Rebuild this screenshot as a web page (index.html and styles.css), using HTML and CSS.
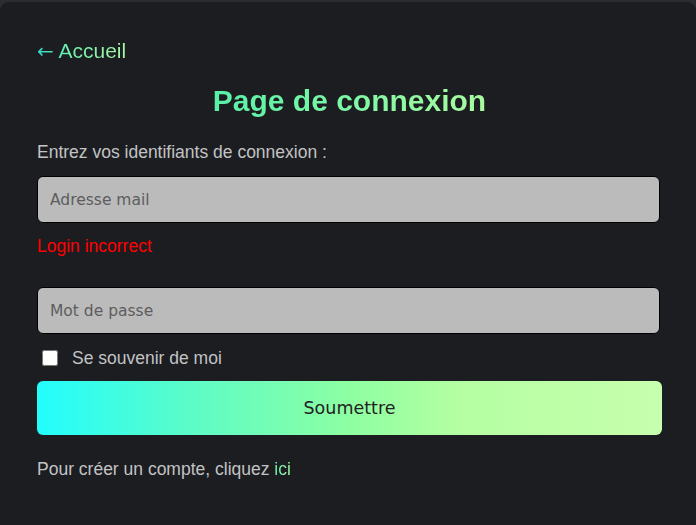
FILE: index.html
```html
<!DOCTYPE html>
<html lang="fr">
<head>
<meta charset="utf-8">
<title>Connexion</title>
<link rel="stylesheet" href="styles.css">
</head>
<body>
<main class="card">
  <a class="home" href="#"><span class="arrow">←</span> Accueil</a>
  <h1 class="title">Page de connexion</h1>
  <p class="intro">Entrez vos identifiants de connexion :</p>
  <input class="field" type="email" placeholder="Adresse mail">
  <p class="error">Login incorrect</p>
  <input class="field field-pass" type="password" placeholder="Mot de passe">
  <label class="remember"><input type="checkbox" class="check"><span>Se souvenir de moi</span></label>
  <button class="submit" type="button">Soumettre</button>
  <p class="footer">Pour créer un compte, cliquez <a class="link" href="#">ici</a></p>
</main>
</body>
</html>
```

FILE: styles.css
```css
html, body {
  margin: 0;
  padding: 0;
  background: #2b2c2f;
  height: 100%;
  overflow: hidden;
}
body {
  font-family: "Liberation Sans", Arial, sans-serif;
}
.card {
  margin-top: 2px;
  height: 540px;
  background: #1c1d21;
  border-radius: 9px;
  padding: 37px 34px 0 37px;
  box-sizing: border-box;
  display: flex;
  flex-direction: column;
  align-items: flex-start;
}
.home {
  font-size: 21px;
  line-height: 24px;
  text-decoration: none;
  background: linear-gradient(90deg, #2fd6c4 0%, #6df2ae 35%, #a6f7a2 100%);
  -webkit-background-clip: text;
  background-clip: text;
  color: transparent;
}
.arrow {
  font-family: "DejaVu Sans", sans-serif;
  font-size: 20px;
}
.title {
  align-self: center;
  margin: 20px 0 0 0;
  font-size: 30px;
  line-height: 36px;
  font-weight: bold;
  background: linear-gradient(90deg, #57f1a8 0%, #82f8a4 55%, #a9fc9f 100%);
  -webkit-background-clip: text;
  background-clip: text;
  color: transparent;
}
.intro {
  margin: 23px 0 0 0;
  font-size: 17.5px;
  line-height: 20px;
  color: #c2c3c4;
}
.field {
  margin-top: 14px;
  width: 623px;
  height: 47px;
  box-sizing: border-box;
  border: 1px solid #000;
  border-radius: 6px;
  background: #bbbbbb;
  padding: 0 12px;
  font-family: "DejaVu Sans", Tahoma, sans-serif;
  font-size: 15.5px;
  color: #333;
  outline: none;
}
.field::placeholder {
  color: #5d5d5f;
}
.error {
  margin: 13px 0 0 0;
  font-size: 17.5px;
  line-height: 20px;
  color: #ff0000;
}
.field-pass {
  margin-top: 31px;
}
.remember {
  display: flex;
  align-items: center;
  margin-top: 14px;
  font-size: 17.5px;
  line-height: 20px;
  color: #c2c3c4;
}
.check {
  width: 16px;
  height: 16px;
  margin: 0 14px 0 5px;
}
.submit {
  margin-top: 13px;
  width: 625px;
  height: 54px;
  border: none;
  border-radius: 6px;
  background: linear-gradient(90deg, #22fdfd 0%, #5dfcc6 25%, #8dffa2 50%, #b5ffa2 68%, #c7ffae 100%);
  font-family: "DejaVu Sans", Tahoma, sans-serif;
  font-size: 17.5px;
  color: #222;
  cursor: pointer;
}
.footer {
  margin: 24px 0 0 0;
  font-size: 17.5px;
  line-height: 20px;
  color: #c2c3c4;
}
.link {
  text-decoration: none;
  background: linear-gradient(90deg, #63f1b4, #a8fb9f);
  -webkit-background-clip: text;
  background-clip: text;
  color: transparent;
}
```
